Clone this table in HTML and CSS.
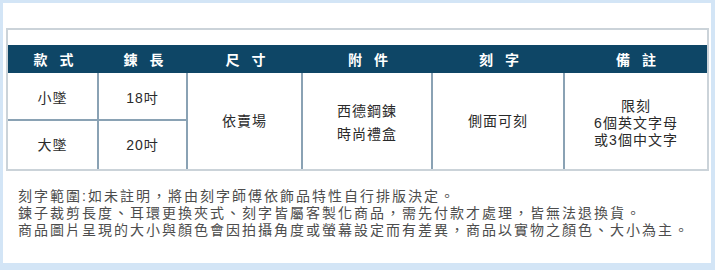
FILE: index.html
```html
<!DOCTYPE html>
<html lang="zh-Hant">
<head>
<meta charset="utf-8">
<title>商品規格</title>
<link rel="stylesheet" href="styles.css">
</head>
<body>
<div class="panel">
  <div class="spec-box">
    <div class="spec-grid">
      <div class="th">款 式</div>
      <div class="th">鍊 長</div>
      <div class="th">尺 寸</div>
      <div class="th">附 件</div>
      <div class="th">刻 字</div>
      <div class="th">備 註</div>

      <div class="td r1 c1">小墜</div>
      <div class="td r1 c2">18吋</div>
      <div class="td span c3">依賣場</div>
      <div class="td span c4 two">西德鋼鍊<br>時尚禮盒</div>
      <div class="td span c5">側面可刻</div>
      <div class="td span c6 last three">限刻<br>6個英文字母<br>或3個中文字</div>

      <div class="td r2 c1">大墜</div>
      <div class="td r2 c2">20吋</div>
    </div>
  </div>
  <div class="notes">
    <p>刻字範圍:如未註明，將由刻字師傅依飾品特性自行排版決定。</p>
    <p>鍊子裁剪長度、耳環更換夾式、刻字皆屬客製化商品，需先付款才處理，皆無法退換貨。</p>
    <p>商品圖片呈現的大小與顏色會因拍攝角度或螢幕設定而有差異，商品以實物之顏色、大小為主。</p>
  </div>
</div>
</body>
</html>
```

FILE: styles.css
```css
* {
  box-sizing: border-box;
}

html, body {
  margin: 0;
  padding: 0;
}

body {
  background: #d3e5f6;
  width: 715px;
  height: 270px;
  padding: 3px 4px 7px 3px;
  font-family: "Liberation Sans", "Noto Sans CJK TC", sans-serif;
}

.panel {
  background: #ffffff;
  height: 260px;
  padding: 25px 2px 0 3px;
}

.spec-box {
  border: 2px solid #cbd3d9;
  padding-top: 15px;
}

.spec-grid {
  display: grid;
  grid-template-columns: 91px 89px 115px 130px 132px 1fr;
  grid-template-rows: 28px 48px 48px;
}

.th {
  background: #0e4666;
  color: #ffffff;
  font-weight: bold;
  font-size: 14px;
  letter-spacing: 4px;
  text-indent: 4px;
  display: flex;
  align-items: center;
  justify-content: center;
}

.td {
  color: #2a2a2a;
  font-size: 14px;
  letter-spacing: 1px;
  line-height: 17px;
  text-align: center;
  display: flex;
  align-items: center;
  justify-content: center;
  border-right: 2px solid #8aa2b4;
}

.td.last {
  border-right: none;
}

.r1 {
  border-bottom: 2px solid #8aa2b4;
  padding-top: 4px;
}

.r1.c1 { grid-row: 2; grid-column: 1; }
.r1.c2 { grid-row: 2; grid-column: 2; }
.r2.c1 { grid-row: 3; grid-column: 1; }
.r2.c2 { grid-row: 3; grid-column: 2; }

.span {
  grid-row: 2 / span 2;
}

.c3 { grid-column: 3; }
.c4 { grid-column: 4; }
.c5 { grid-column: 5; }
.c6 { grid-column: 6; }

.two {
  line-height: 23px;
  padding-top: 3px;
}

.three {
  padding-top: 4px;
}

.notes {
  padding: 17px 0 0 12px;
  color: #4d4d4d;
  font-size: 14px;
  letter-spacing: 2px;
  line-height: 17px;
}

.notes p {
  margin: 0;
}
```
